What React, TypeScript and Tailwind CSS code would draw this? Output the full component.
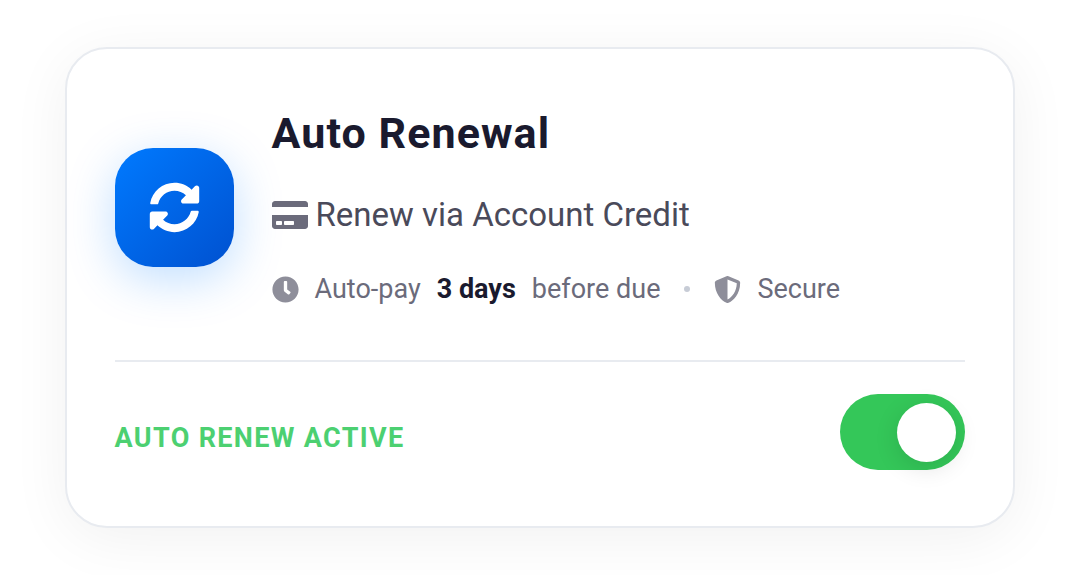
import React, { useState } from 'react';
import { FaClock, FaCreditCard, FaShieldAlt, FaSyncAlt } from 'react-icons/fa';

interface ToggleProps {
  id: string;
  checked: boolean;
  onChange: (checked: boolean) => void;
}

function Toggle({ id, checked, onChange }: ToggleProps) {
  return (
    <span className="relative inline-flex shrink-0">
      <input
        id={id}
        type="checkbox"
        role="switch"
        checked={checked}
        onChange={(e) => onChange(e.target.checked)}
        className="peer h-[76px] w-[125px] cursor-pointer appearance-none rounded-full bg-gray-300 transition-colors checked:bg-[#34c759]"
      />
      <span className="pointer-events-none absolute left-[9px] top-[9px] size-[59px] rounded-full bg-white shadow-[0_6px_24px_rgba(0,0,0,0.12)] transition-transform peer-checked:translate-x-[48px]"></span>
    </span>
  );
}

function App() {
  const [active, setActive] = useState(true);

  return (
    <main className="bg-white px-8 py-[47px] font-['Roboto',sans-serif]">
      <section className="mx-auto max-w-[950px] rounded-[42px] border-2 border-[#e8ebf0] bg-white px-12 py-14 shadow-[0_10px_60px_rgba(0,0,0,0.06)]">
        {/* Summary */}
        <div className="flex items-center gap-[38px] border-b-2 border-[#e8ebf0] pb-[51px]">
          <div className="flex size-[119px] shrink-0 items-center justify-center rounded-[38px] bg-linear-to-br from-[#007aff] to-[#0051d0] text-white shadow-[0_12px_48px_rgba(0,122,255,0.25)]">
            <FaSyncAlt className="size-[51px]" />
          </div>

          <div className="flex flex-col gap-8">
            <h1 className="text-[43px] leading-[56px] font-bold tracking-wide text-[#1a1a2e]">Auto Renewal</h1>
            <p className="flex items-center gap-2 text-[33px] leading-[44px] text-[#4a4a5a]">
              <FaCreditCard className="h-8 w-9 text-[#6b6b7b]" />
              Renew via Account Credit
            </p>
            <div className="flex items-center gap-4 text-[27px] leading-[40px] text-[#6b6b7b]">
              <FaClock className="size-[27px] text-[#8e8e9a]" />
              <span>Auto-pay</span>
              <strong className="font-bold text-[#1a1a2e]">3 days</strong>
              <span>before due</span>
              <span className="mx-2 size-1.5 rounded-full bg-[#c7ccd6]"></span>
              <FaShieldAlt className="size-[27px] text-[#8e8e9a]" />
              <span>Secure</span>
            </div>
          </div>
        </div>

        {/* Status */}
        <div className="flex items-center justify-between pt-8">
          <label htmlFor="auto-renew" className="pt-3 text-[27px] leading-[36px] font-bold tracking-wider text-[#4cd071] uppercase">
            {active ? 'Auto renew active' : 'Auto renew off'}
          </label>
          <Toggle id="auto-renew" checked={active} onChange={setActive} />
        </div>
      </section>
    </main>
  );
}

export default App;
